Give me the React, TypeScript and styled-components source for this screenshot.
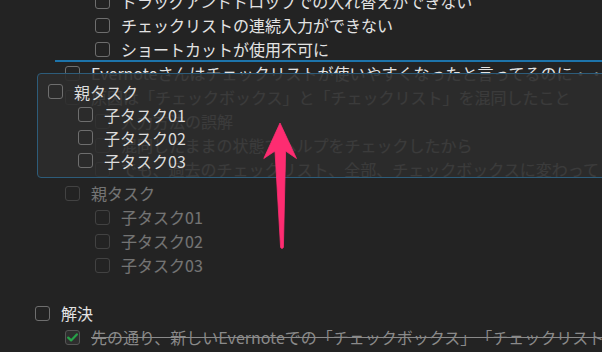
import React from 'react'
import styled, {createGlobalStyle} from 'styled-components'

const GlobalStyle = createGlobalStyle`
  html, body {
    margin: 0;
    padding: 0;
    background: #232323;
  }
  body {
    font-family: "Noto Sans CJK JP", "Noto Sans", sans-serif;
  }
`

type Item = {
    level: number
    text?: string
    dropBelow?: boolean
    faded?: boolean
    done?: boolean
}

const items: Item[] = [
    {level: 2, text: 'ドラッグアンドドロップでの入れ替えができない'},
    {level: 2, text: 'チェックリストの連続入力ができない'},
    {level: 2, text: 'ショートカットが使用不可に', dropBelow: true},
    {level: 1, text: 'Evernoteさんはチェックリストが使いやすくなったと言ってるのに・・・'},
    {level: 1, text: '原因は「チェックボックス」と「チェックリスト」を混同したこと'},
    {level: 2, text: '入力方法の誤解'},
    {level: 2, text: '混同したままの状態でヘルプをチェックしたから'},
    {level: 2, text: 'でも、過去のチェックリスト、全部、チェックボックスに変わってしまった'},
    {level: 1, text: '親タスク', faded: true},
    {level: 2, text: '子タスク01', faded: true},
    {level: 2, text: '子タスク02', faded: true},
    {level: 2, text: '子タスク03', faded: true},
    {level: 0},
    {level: 0, text: '解決'},
    {level: 1, text: '先の通り、新しいEvernoteでの「チェックボックス」「チェックリスト」の違いを理解すれば解決', done: true},
]

const ghostItems = [
    {level: 0, text: '親タスク'},
    {level: 1, text: '子タスク01'},
    {level: 1, text: '子タスク02'},
    {level: 1, text: '子タスク03'},
]

const CheckIcon = () => (
    <svg width="11" height="9" viewBox="0 0 11 9" fill="none">
        <path d="M1.2 4.6 L4.1 7.4 L9.8 1.4" stroke="#27a348" strokeWidth="2.2" strokeLinecap="round" strokeLinejoin="round"/>
    </svg>
)

const App = () => {
    return (
        <>
            <GlobalStyle/>
            <Page>
                <List>
                    {items.map((item, i) => (
                        <Row key={i} $level={item.level} $faded={item.faded}>
                            {item.text && (
                                <>
                                    <Box $checked={item.done}>{item.done && <CheckIcon/>}</Box>
                                    <Label $done={item.done}>{item.text}</Label>
                                </>
                            )}
                            {item.dropBelow && <DropLine/>}
                        </Row>
                    ))}
                </List>

                <Ghost>
                    {ghostItems.map((item, i) => (
                        <GhostRow key={i} $level={item.level}>
                            <Box/>
                            <Label>{item.text}</Label>
                        </GhostRow>
                    ))}
                </Ghost>

                <Arrow width="40" height="130" viewBox="262 120 40 130">
                    <path
                        d="M280 123 L296.5 158.5 L285.6 151 L283.4 247.5 Q282 249.5 280.6 247.5 L275 151 L263.8 158.5 Z"
                        fill="#fe2c71"
                        stroke="#fe2c71"
                        strokeWidth="0.8"
                        strokeLinejoin="round"
                    />
                </Arrow>
            </Page>
        </>
    )
}

const Page = styled.div`
  position: relative;
  width: 602px;
  height: 352px;
  overflow: hidden;
  background: #232323;
`

const List = styled.div`
  display: flex;
  flex-direction: column;
  margin-top: -11px;
`

const Row = styled.div<{ $level: number, $faded?: boolean }>`
  position: relative;
  display: flex;
  align-items: center;
  height: 24px;
  padding-left: ${p => 35 + p.$level * 30}px;
  white-space: nowrap;
  opacity: ${p => p.$faded ? 0.42 : 1};
`

const Box = styled.div<{ $checked?: boolean }>`
  flex: none;
  display: flex;
  align-items: center;
  justify-content: center;
  width: 15px;
  height: 15px;
  box-sizing: border-box;
  border: 1px solid ${p => p.$checked ? '#555555' : '#6e6e6e'};
  background: ${p => p.$checked ? '#2e2e2e' : 'transparent'};
  border-radius: 3px;
  margin-right: 11px;
`

const Label = styled.span<{ $done?: boolean }>`
  font-size: 16px;
  line-height: 24px;
  text-spacing-trim: space-all;
  color: ${p => p.$done ? '#8a8a8a' : '#e3e3e3'};
  text-decoration: ${p => p.$done ? 'line-through' : 'none'};
  text-decoration-color: #8a8a8a;
`

const DropLine = styled.div`
  position: absolute;
  left: 55px;
  right: 0;
  bottom: -1px;
  height: 2px;
  background: #1d74ab;
`

const Ghost = styled.div`
  position: absolute;
  left: 37px;
  top: 73px;
  width: 600px;
  height: 105px;
  box-sizing: border-box;
  padding: 6px 0 8px;
  border: 1px solid #2d5c7a;
  border-radius: 4px;
  background: rgba(45, 45, 45, 0.92);
  display: flex;
  flex-direction: column;
`

const GhostRow = styled.div<{ $level: number }>`
  display: flex;
  align-items: center;
  height: 23px;
  padding-left: ${p => 10 + p.$level * 30}px;
  white-space: nowrap;

  ${Label} {
    color: #dcdcdc;
  }
`

const Arrow = styled.svg`
  position: absolute;
  left: 262px;
  top: 120px;
`

export default App
